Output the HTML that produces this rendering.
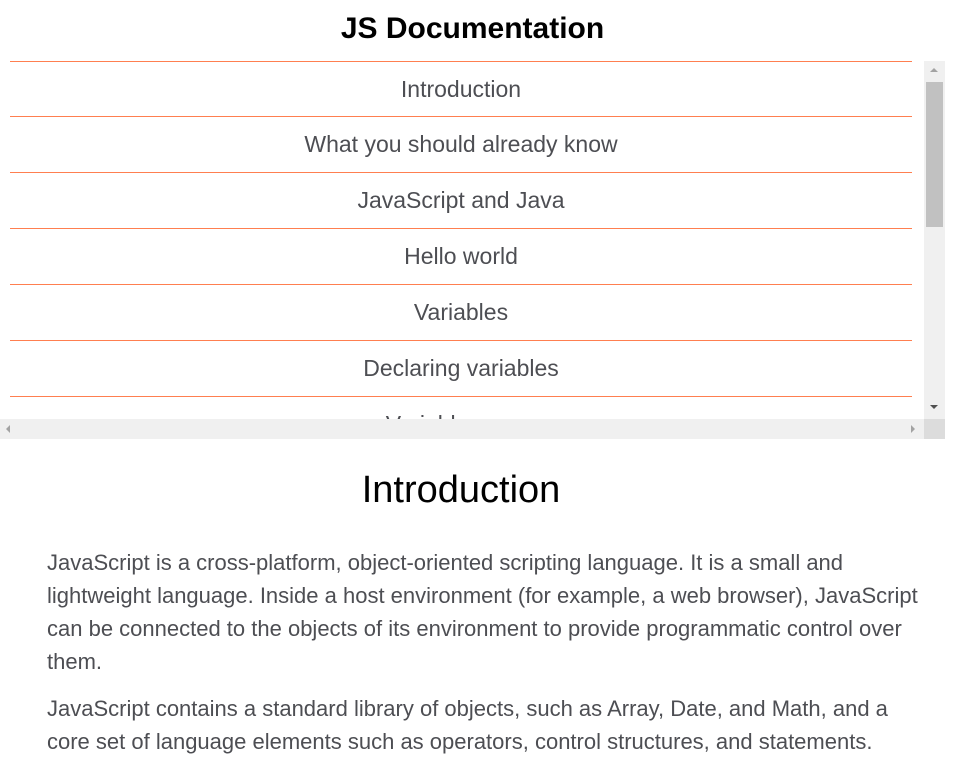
<!DOCTYPE html>
<html><head><meta charset="utf-8"><style>
*{margin:0;padding:0;box-sizing:border-box}
body{width:973px;height:757px;overflow:hidden;background:#fff;font-family:"Liberation Sans",Arial,sans-serif;position:relative}
.title{position:absolute;top:12px;left:0;width:945px;text-align:center;font-size:30px;font-weight:bold;color:#000;line-height:34px}
.nav{position:absolute;top:61px;left:0;width:924px;height:358px;overflow:hidden}
.item{position:absolute;left:10px;width:902px;border-top:1px solid #ff7f50;height:56px;text-align:center;font-size:23px;color:#4d4e53;line-height:54px}
.vbar{position:absolute;left:924px;top:61px;width:21px;height:358px;background:#f0f0f0}
.thumb{position:absolute;left:926px;top:82px;width:17px;height:145px;background:#c1c1c1}
.hbar{position:absolute;left:0;top:419px;width:924px;height:20px;background:#f0f0f0}
.corner{position:absolute;left:924px;top:419px;width:21px;height:20px;background:#dcdcdc}
.tri{position:absolute;width:0;height:0}
h2{position:absolute;top:467px;left:0;width:922px;text-align:center;font-size:38px;font-weight:normal;color:#000;line-height:46px}
.txt{position:absolute;left:47px;top:546px;width:885px}
.p{font-size:22px;line-height:33px;color:#4d4e53;margin-bottom:14px}
</style></head><body>
<div class="title">JS Documentation</div>
<div class="nav">
<div class="item" style="top:0">Introduction</div>
<div class="item" style="top:55px">What you should already know</div>
<div class="item" style="top:111px">JavaScript and Java</div>
<div class="item" style="top:167px">Hello world</div>
<div class="item" style="top:223px">Variables</div>
<div class="item" style="top:279px">Declaring variables</div>
<div class="item" style="top:335px">Variable scope</div>
</div>
<div class="vbar"></div><div class="thumb"></div>
<div class="tri" style="left:930px;top:68px;border-left:4px solid transparent;border-right:4px solid transparent;border-bottom:4px solid #a3a3a3"></div>
<div class="tri" style="left:930px;top:405px;border-left:4px solid transparent;border-right:4px solid transparent;border-top:4px solid #505050"></div>
<div class="hbar"></div><div class="corner"></div>
<div class="tri" style="left:6px;top:425px;border-top:4px solid transparent;border-bottom:4px solid transparent;border-right:4px solid #a3a3a3"></div>
<div class="tri" style="left:911px;top:425px;border-top:4px solid transparent;border-bottom:4px solid transparent;border-left:4px solid #a3a3a3"></div>
<h2>Introduction</h2>
<div class="txt">
<div class="p">JavaScript is a cross-platform, object-oriented scripting language. It is a small and lightweight language. Inside a host environment (for example, a web browser), JavaScript can be connected to the objects of its environment to provide programmatic control over them.</div>
<div class="p">JavaScript contains a standard library of objects, such as Array, Date, and Math, and a core set of language elements such as operators, control structures, and statements.</div>
</div>
</body></html>
